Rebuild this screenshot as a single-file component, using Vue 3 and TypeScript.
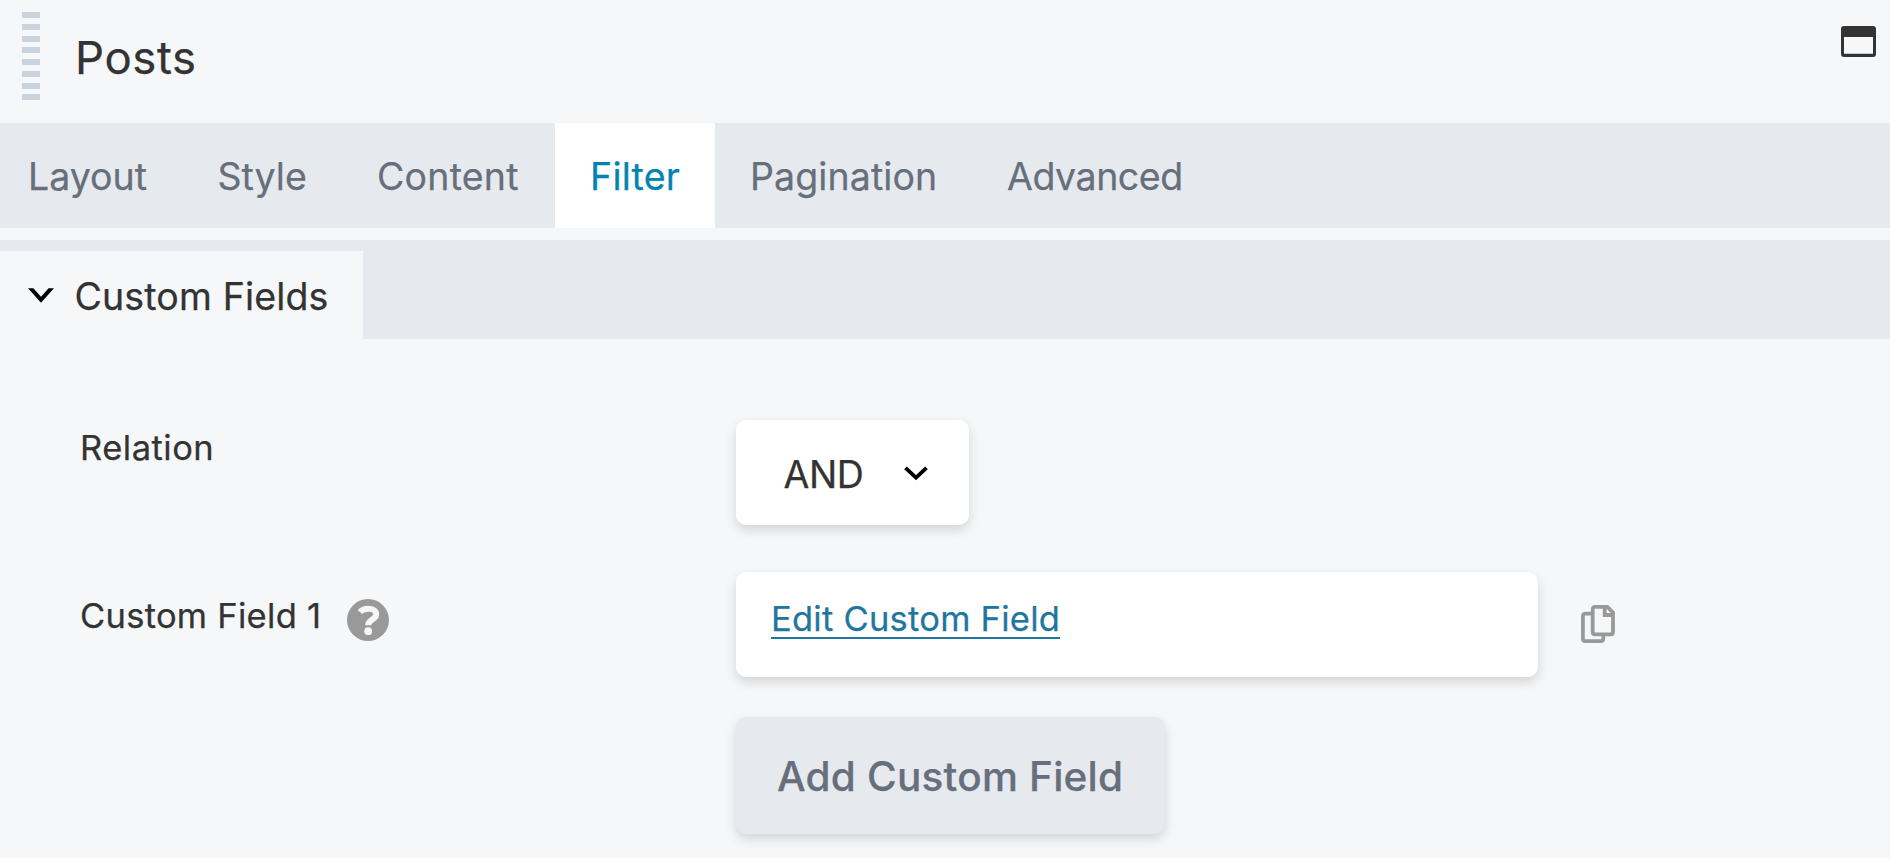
<script setup lang="ts">
import { ref } from 'vue'

const tabs = ['Layout', 'Style', 'Content', 'Filter', 'Pagination', 'Advanced']
const activeTab = ref('Filter')
</script>

<template>
  <main class="panel">
    <header class="header">
      <div class="grip"><i v-for="n in 8" :key="n"></i></div>
      <h1 class="title">Posts</h1>
      <svg class="window" viewBox="0 0 35 31">
        <path fill="#333" fill-rule="evenodd" d="M3 0H32Q35 0 35 3V28Q35 31 32 31H3Q0 31 0 28V3Q0 0 3 0ZM3 11V27.7H32V11Z" />
      </svg>
    </header>

    <nav class="tabs">
      <a
        v-for="tab in tabs"
        :key="tab"
        class="tab"
        :class="[tab.toLowerCase(), { active: tab === activeTab }]"
        @click="activeTab = tab"
      >{{ tab }}</a>
    </nav>

    <div class="section-bar">
      <h2 class="section">
        <svg class="section-arrow" viewBox="0 0 26 15"><path d="M0 .3H5.4L13 8.8 20.6 .3H26L13 14.7Z" /></svg>
        <span>Custom Fields</span>
      </h2>
    </div>

    <div class="fields">
      <div class="row relation">
        <label class="label">Relation</label>
        <button class="select">
          <span>AND</span>
          <svg class="select-arrow" viewBox="0 0 24 15"><path d="M1.5 1.8 12 11.7 22.5 1.8" fill="none" stroke="#000" stroke-width="3.8" /></svg>
        </button>
      </div>

      <div class="row custom">
        <label class="label">
          <span>Custom Field 1</span>
          <svg class="help" viewBox="0 0 42 42">
            <circle cx="21" cy="21" r="21" fill="#999" />
            <path d="M13 13.2C16.4 8.8 29.2 8 29.2 15.4 29.2 20.6 21.2 20.4 21.2 26.2" fill="none" stroke="#f5f7f9" stroke-width="6" />
            <circle cx="21.2" cy="32.2" r="3.9" fill="#f5f7f9" />
          </svg>
        </label>
        <div class="card"><a class="edit">Edit Custom Field</a></div>
        <svg class="copy" viewBox="0 0 34 38" fill="none" stroke="#999" stroke-width="3.8">
          <path d="M10 8.7H4.4Q1.9 8.7 1.9 11.2V33.6Q1.9 36.1 4.4 36.1H19.8Q22.3 36.1 22.3 33.6V30" />
          <path d="M14 1.9H26.3L32 7.6V27Q32 29.3 29.6 29.3H14Q11.7 29.3 11.7 27V4.2Q11.7 1.9 14 1.9Z" />
          <path d="M23.7 2V10H32" />
        </svg>
      </div>

      <button class="add">Add Custom Field</button>
    </div>
  </main>
</template>

<style>
body {
  margin: 0;
  background: #f5f7f9;
}
</style>

<style scoped>
* {
  box-sizing: border-box;
}
.panel {
  height: 858px;
  overflow: hidden;
  background: #f5f7f9;
  color: #333;
  font-family: Inter, "Liberation Sans", sans-serif;
  font-size: 37.5px;
  white-space: nowrap;
  -webkit-text-stroke: 0.25px currentColor;
}
svg {
  display: block;
  flex: none;
}
h1,
h2 {
  margin: 0;
  font-weight: 400;
}
button {
  border: 0;
  padding: 0;
  color: inherit;
  font: inherit;
}
.header {
  display: flex;
  align-items: flex-start;
  height: 123px;
  padding: 12px 14px 0 22px;
}
.grip {
  display: grid;
  gap: 5.75px;
  width: 18px;
  margin-right: 35px;
}
.grip i {
  height: 6px;
  background: #cbd4dc;
}
.title {
  margin-top: 21px;
  font-size: 45.5px;
  line-height: 50px;
  letter-spacing: 0.6px;
}
.window {
  width: 35px;
  height: 31px;
  margin: 14px 0 0 auto;
}
.tabs {
  display: grid;
  grid-template-columns: 182px 160px 213px 160px 257px 1fr;
  grid-template-rows: 105px;
  height: 105px;
  background: #e6eaee;
  color: #676f7c;
}
.tab {
  height: 105px;
  padding: 3px 0 0 35px;
  line-height: 102px;
}
.layout {
  padding-left: 28px;
}
.style {
  padding-left: 35.5px;
}
.content {
  letter-spacing: 0.2px;
}
.filter {
  letter-spacing: 0.25px;
}
.pagination {
  letter-spacing: 0.1px;
}
.advanced {
  letter-spacing: -0.45px;
}
.active {
  background: #fff;
  color: #0085b2;
}
.section-bar {
  height: 99px;
  margin-top: 12px;
  padding-top: 11px;
  background: #e6eaee;
}
.section {
  display: flex;
  align-items: center;
  width: 363px;
  height: 88px;
  padding-left: 28px;
  background: #f5f7f9;
  font-size: 37.5px;
  line-height: 84px;
  letter-spacing: 0.15px;
}
.section span {
  padding-top: 3px;
}
.section-arrow {
  width: 26px;
  height: 15px;
  margin-right: 20.5px;
}
.fields {
  padding: 81px 0 0 80px;
}
.row {
  display: flex;
  align-items: flex-start;
}
.label {
  display: flex;
  align-items: flex-start;
  flex: none;
  width: 656px;
  font-size: 34.5px;
  line-height: 44px;
}
.relation .label {
  padding-top: 6px;
  letter-spacing: 0.5px;
}
.custom {
  margin-top: 47px;
}
.custom .label {
  padding-top: 22px;
  letter-spacing: 0.28px;
}
.help {
  width: 42px;
  height: 42px;
  margin: 5px 0 0 26px;
}
.select,
.card,
.add {
  border-radius: 10px;
  box-shadow: 0 5px 12px rgba(0, 0, 0, 0.14);
}
.select {
  display: flex;
  align-items: flex-start;
  width: 233px;
  height: 105px;
  padding-left: 47.5px;
  background: #fff;
  line-height: 109px;
  letter-spacing: -0.4px;
}
.select-arrow {
  width: 24px;
  height: 15px;
  margin: 45.5px 0 0 40.5px;
}
.card {
  width: 802px;
  height: 105px;
  padding: 25px 0 0 35px;
  background: #fff;
  font-size: 34.5px;
  line-height: 44px;
}
.edit {
  display: inline-block;
  height: 42px;
  border-bottom: 2px solid #1f77a0;
  color: #1f77a0;
  letter-spacing: 0.25px;
}
.copy {
  width: 34px;
  height: 38px;
  margin: 33px 0 0 43px;
}
.add {
  display: block;
  width: 429px;
  height: 117px;
  margin: 40px 0 0 656px;
  padding: 3px 0 0 41px;
  background: #e6eaee;
  color: #676f7c;
  font-size: 40.5px;
  font-weight: 500;
  line-height: 114px;
  letter-spacing: 0.21px;
  text-align: left;
}
</style>
